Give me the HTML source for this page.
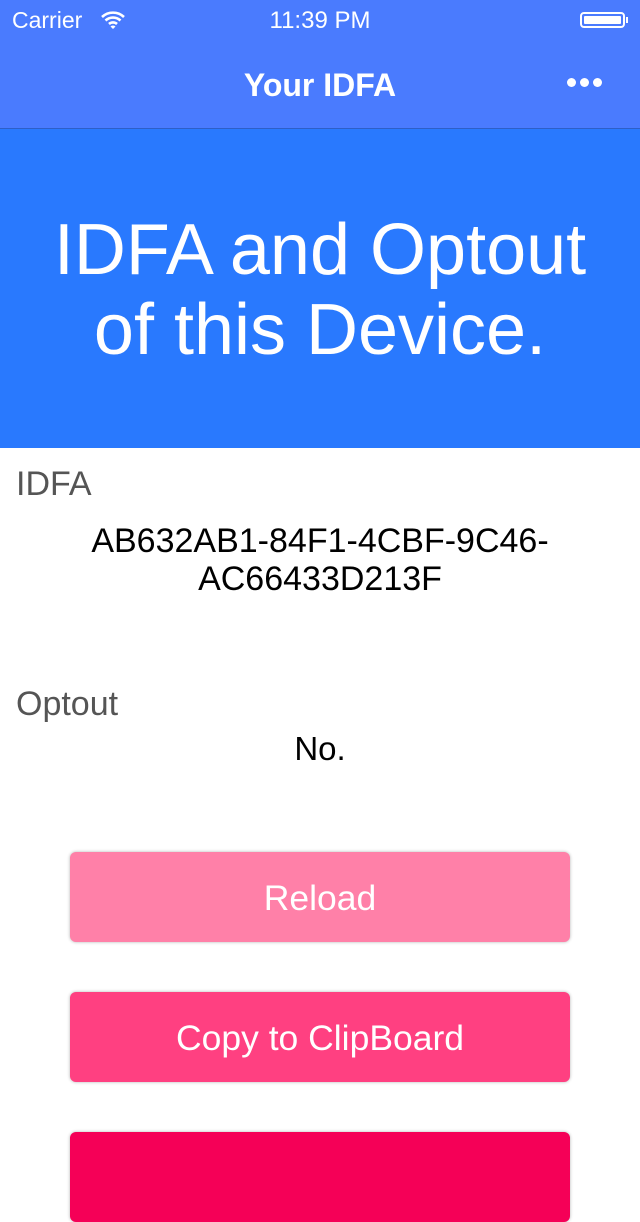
<!DOCTYPE html>
<html><head><meta charset="utf-8"><style>
body{margin:0;width:640px;height:1136px;overflow:hidden;background:#fff;font-family:"Liberation Sans",sans-serif;position:relative}
.abs{position:absolute}
.nav{left:0;top:0;width:640px;height:128px;background:#4a7bfe;border-bottom:1px solid #2d5fc8}
.hero{left:0;top:129px;width:640px;height:319px;background:#2979fe;color:#fff;font-size:72px;text-align:center;line-height:80px}
.btn{left:70px;width:500px;height:90px;border-radius:6px;color:#fff;font-size:35.5px;text-align:center;line-height:92px;box-shadow:0 0 3px rgba(0,0,0,.3)}
.dot{position:absolute;top:78px;width:9px;height:9px;border-radius:50%;background:#fff}
</style></head><body>
<div class="abs nav">
 <div class="abs" style="left:12px;top:7px;color:#fff;font-size:23px">Carrier</div>
 <svg class="abs" style="left:100px;top:10px" width="26" height="20" viewBox="0 0 26 20"><path d="M2 7a16 16 0 0 1 22 0M5.5 10.5a11 11 0 0 1 15 0M9 14a6 6 0 0 1 8 0" stroke="#fff" stroke-width="2.6" fill="none"/><path d="M10.5 16.5L13 19l2.5-2.5a3.5 3.5 0 0 0-5 0z" fill="#fff"/></svg>
 <div class="abs" style="left:0;width:640px;text-align:center;top:7px;color:#fff;font-size:24px">11:39 PM</div>
 <div class="abs" style="left:580px;top:12px;width:45px;height:16px;border:2px solid #fff;border-radius:4px;box-sizing:border-box;padding:2px"><div style="background:#fff;width:100%;height:100%;border-radius:1px"></div></div>
 <div class="abs" style="left:626px;top:17px;width:2px;height:6px;background:#fff"></div>
 <div class="abs" style="left:0;width:640px;text-align:center;top:67px;color:#fff;font-size:32px;font-weight:bold">Your IDFA</div>
 <div class="dot" style="left:567px"></div><div class="dot" style="left:580px"></div><div class="dot" style="left:593px"></div>
</div>
<div class="abs hero"><div style="padding-top:81px">IDFA and Optout<br>of this Device.</div></div>
<div class="abs" style="left:16px;top:465px;font-size:34px;color:#555">IDFA</div>
<div class="abs" style="left:0;width:640px;text-align:center;top:522px;font-size:34px;line-height:38px;color:#000">AB632AB1-84F1-4CBF-9C46-<br>AC66433D213F</div>
<div class="abs" style="left:16px;top:685px;font-size:34px;color:#555">Optout</div>
<div class="abs" style="left:0;width:640px;text-align:center;top:730px;font-size:33px;color:#000">No.</div>
<div class="abs btn" style="top:852px;background:#ff80a8">Reload</div>
<div class="abs btn" style="top:992px;background:#ff4081">Copy to ClipBoard</div>
<div class="abs btn" style="top:1132px;background:#f50057"></div>
</body></html>
